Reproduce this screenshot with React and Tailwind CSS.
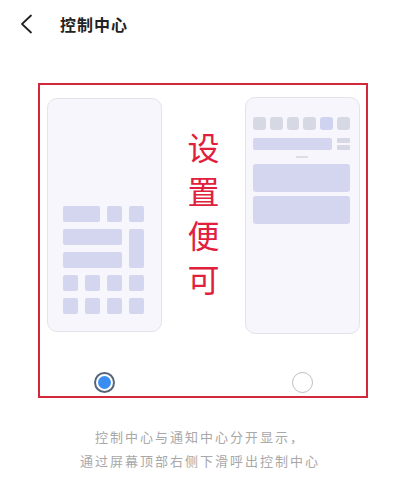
import React from 'react';

const font = { fontFamily: '"Noto Sans CJK SC", "Noto Sans", sans-serif' };

const Blk = ({ className = '' }) => <div className={`bg-[#d3d6ee] rounded-[2px] ${className}`} />;

const LeftPhone = () => (
  <div className="w-[115px] h-[234px] rounded-[10px] border border-[#e3e3ea] bg-[#f6f6fc] flex flex-col justify-end pl-[15px] pb-[17px]">
    <div className="grid grid-cols-[15px_15px_15px_15px] grid-rows-[16px_16px_16px_16px_16px] gap-[7px]">
      <Blk className="col-span-2" />
      <Blk />
      <Blk />
      <Blk className="col-span-3" />
      <Blk className="row-span-2" />
      <Blk className="col-span-3" />
      <Blk />
      <Blk />
      <Blk />
      <Blk />
      <Blk />
      <Blk />
      <Blk />
      <Blk />
    </div>
  </div>
);

const RightPhone = () => (
  <div className="w-[115px] h-[237px] -mt-px rounded-[10px] border border-[#e3e3ea] bg-[#f6f6fc] pt-[19px] pl-[7px] pr-[9px]">
    <div className="flex gap-[4px]">
      {['#d6d8e4', '#d6d8e4', '#d6d8e4', '#d6d8e4', '#cfd3f0', '#d6d8e4'].map((c, i) => (
        <div key={i} className="w-[13px] h-[13px] rounded-[3px]" style={{ background: c }} />
      ))}
    </div>
    <div className="flex gap-[5px] mt-[8px]">
      <div className="w-[79px] h-[12px] rounded-[2px] bg-[#d3d6ee]" />
      <div className="flex flex-col gap-[2px] w-[13px]">
        <div className="h-[5px] bg-[#d6d8e4] rounded-[1px]" />
        <div className="h-[5px] bg-[#d6d8e4] rounded-[1px]" />
      </div>
    </div>
    <div className="flex justify-center mt-[6px]">
      <div className="w-[12px] h-[2px] bg-[#dcdde6]" />
    </div>
    <div className="mt-[6px] h-[28px] rounded-[3px] bg-[#d3d6ee]" />
    <div className="mt-[4px] h-[28px] rounded-[3px] bg-[#d3d6ee]" />
  </div>
);

export default function App() {
  return (
    <div className="w-[400px] h-[500px] bg-white overflow-hidden" style={font}>
      <div className="h-[48px] flex items-center">
        <svg className="ml-[19px]" width="14" height="20" viewBox="0 0 14 20" fill="none">
          <path d="M12 1.5 L3 10 L12 18.5" stroke="#222" strokeWidth="1.8" strokeLinecap="round" strokeLinejoin="round" />
        </svg>
        <span className="ml-[27px] text-[16px] font-bold text-[#222] tracking-[1px]">控制中心</span>
      </div>
      <div className="mt-[35px] ml-[38px] w-[330px] h-[315px] border-2 border-[#d2283a] flex flex-col">
        <div className="flex justify-between pl-[7px] pr-[6px] pt-[13px]">
          <LeftPhone />
          <div className="flex-1 flex flex-col items-center gap-[12px] pt-[32px] text-[32px] leading-[32px] text-[#e0203c]">
            <span>设</span>
            <span>置</span>
            <span>便</span>
            <span>可</span>
          </div>
          <RightPhone />
        </div>
        <div className="flex justify-between pl-[7px] pr-[6px] mt-[38px]">
          <div className="w-[115px] flex justify-center">
            <div className="w-[21px] h-[21px] rounded-full border-2 border-[#56657a] p-[2px]">
              <div className="w-full h-full rounded-full bg-[#3a8ef2]" />
            </div>
          </div>
          <div className="w-[115px] flex justify-center">
            <div className="w-[21px] h-[21px] rounded-full border border-[#bdbdbd]" />
          </div>
        </div>
      </div>
      <div className="mt-[27px] text-center text-[13px] leading-[24px] text-[#a8a8a8] tracking-[2px]">
        <div>控制中心与通知中心分开显示，</div>
        <div>通过屏幕顶部右侧下滑呼出控制中心</div>
      </div>
    </div>
  );
}
